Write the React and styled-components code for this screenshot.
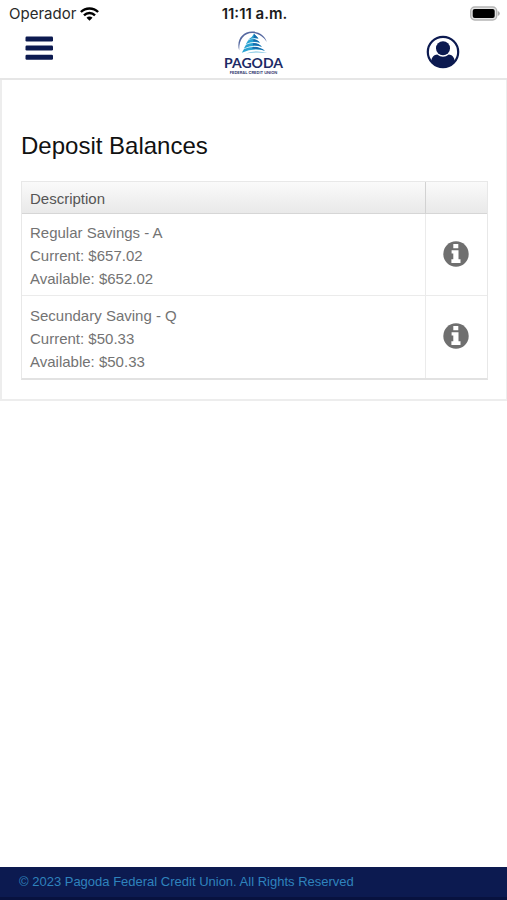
import React from "react";
import styled, { createGlobalStyle } from "styled-components";

const GlobalStyle = createGlobalStyle`
  * { box-sizing: border-box; }
  body {
    margin: 0;
    background: #fff;
    font-family: "Liberation Sans", Arial, sans-serif;
  }
`;

const Page = styled.div`
  min-height: 100vh;
  display: flex;
  flex-direction: column;
`;

const StatusBar = styled.div`
  display: grid;
  grid-template-columns: 1fr auto 1fr;
  align-items: center;
  height: 27px;
  padding: 0 7px 0 9px;
  font-family: Inter, sans-serif;
  font-size: 15px;
  color: #2a2a2a;
`;

const Carrier = styled.div`
  display: flex;
  align-items: center;
  gap: 4px;
`;

const Clock = styled.time`
  font-weight: 600;
  color: #1c1c1c;
`;

const Battery = styled.svg`
  justify-self: end;
  display: block;
`;

const TopBar = styled.header`
  display: grid;
  grid-template-columns: 1fr auto 1fr;
  align-items: start;
  height: 53px;
  border-bottom: 2px solid #e6e6e6;
`;

const IconButton = styled.button`
  display: flex;
  justify-self: ${(p) => p.$side};
  margin: 0 ${(p) => (p.$side === "end" ? 47 : 25)}px;
  padding: 8px 0 0;
  border: 0;
  background: none;
  color: #0c1a50;
  cursor: pointer;
`;

const Logo = styled.a`
  display: flex;
  flex-direction: column;
  align-items: center;
  padding-top: 4px;
  text-decoration: none;
  font-family: Lato, sans-serif;
  color: #1d2b66;
`;

const LogoName = styled.span`
  font-size: 14px;
  line-height: 17px;
  font-weight: 700;
`;

const LogoTagline = styled.span`
  font-family: Inter, sans-serif;
  font-size: 4px;
  line-height: 4px;
  font-weight: 600;
`;

const Card = styled.main`
  padding: 48px 18px 19px 19px;
  border: solid #ededed;
  border-width: 0 1px 2px 2px;
`;

const Title = styled.h1`
  margin: 0 0 18px;
  font-size: 24px;
  line-height: 35px;
  font-weight: 400;
  color: #111;
`;

const Table = styled.table`
  width: 100%;
  border-spacing: 0;
  border: 1px solid #e8e8e8;
  border-bottom: 2px solid #e2e2e2;
  font-size: 15px;
  text-align: left;
`;

const HeadCell = styled.th`
  height: 32px;
  padding: 1px 8px 0;
  border-bottom: 1px solid #d6d6d6;
  background: linear-gradient(#fafafa, #e9e9e9);
  font-weight: 400;
  color: #555;
`;

const ActionHead = styled(HeadCell)`
  width: 62px;
  border-left: 1px solid #d2d2d2;
`;

const Cell = styled.td`
  height: 82px;
  padding: 7px 8px 5px;
  border-bottom: ${(p) => (p.$last ? "0" : "1px solid #ebebeb")};
  line-height: 23px;
  color: #737373;
`;

const ActionCell = styled(Cell)`
  padding: 0 1px 2px 0;
  border-left: 1px solid #ebebeb;
`;

const InfoButton = styled.button`
  display: block;
  margin: 0 auto;
  padding: 0;
  border: 0;
  background: none;
  color: #6f6f6f;
  cursor: pointer;
`;

const Svg = styled.svg`
  display: block;
`;

const Footer = styled.footer`
  margin-top: auto;
  height: 33px;
  padding: 0 19px;
  border-bottom: 3px solid #08123f;
  background: #0c1a50;
  font-size: 13px;
  line-height: 30px;
  color: #2f83bd;
`;

const accounts = [
  { name: "Regular Savings - A", current: "$657.02", available: "$652.02" },
  { name: "Secundary Saving - Q", current: "$50.33", available: "$50.33" },
];

function WifiIcon() {
  return (
    <Svg width="19" height="14" viewBox="0 0 19 14" aria-hidden="true">
      <g fill="none" stroke="#000" strokeWidth="2.4">
        <path d="M0.9 5A12.2 12.2 0 0 1 18.1 5" />
        <path d="M4 8.3A7.8 7.8 0 0 1 15 8.3" />
      </g>
      <path d="M6.5 10.7A4.2 4.2 0 0 1 12.5 10.7L9.5 13.7Z" />
    </Svg>
  );
}

function BatteryIcon() {
  return (
    <Battery width="31" height="15" viewBox="0 0 31 15" aria-hidden="true">
      <rect x="1.7" y="1" width="26" height="13" rx="4" fill="#e4e4e4" stroke="#b5b5b5" strokeWidth="1.4" />
      <rect x="3.7" y="3" width="22" height="9" rx="2" fill="#000" />
      <path d="M28.8 5Q30.8 5.8 30.8 7.5T28.8 10Z" fill="#aaa" />
    </Battery>
  );
}

function MenuIcon() {
  return (
    <Svg width="28" height="25" viewBox="0 0 28 25" fill="currentColor" aria-hidden="true">
      <rect x="0.5" y="1.5" width="27.5" height="5" rx="1.2" />
      <rect x="0.5" y="10.5" width="27.5" height="5" rx="1.2" />
      <rect x="0.5" y="19.7" width="27.5" height="5" rx="1.2" />
    </Svg>
  );
}

function ProfileIcon() {
  return (
    <Svg width="34" height="34" viewBox="0 0 34 34" aria-hidden="true">
      <circle cx="17" cy="17" r="15.2" fill="none" stroke="currentColor" strokeWidth="2.2" />
      <circle cx="17" cy="13.3" r="7" fill="currentColor" />
      <path d="M5.2 26C5.8 21.8 8.2 19.9 11.2 19.5Q17 24 22.8 19.5C25.8 19.9 28.2 21.8 28.8 26Q24 32.5 17 32.5T5.2 26Z" fill="currentColor" />
    </Svg>
  );
}

function PagodaMark() {
  return (
    <Svg width="32" height="23" viewBox="0 0 32 23" aria-hidden="true">
      <path d="M2.2 19.5C-1 9 5.5 .7 15 .6C22 .5 28 4.5 29.8 11C26.4 5.4 21 2.2 15.4 2.1C7 2 1.8 9 2.2 19.5Z" fill="#5568a0" />
      <g fill="#2aa3d2">
        <path d="M17 2.8L21.5 7.6Q16 6.3 11 8.8Q15.5 6.2 17 2.8Z" />
        <path d="M11 9.5Q17.5 5.8 23 11.8Q15.5 9.6 8.8 13.3Z" />
        <path d="M9 13.8Q17.5 9.6 25 15.8Q15.5 13.2 6.8 17.6Z" />
        <path d="M7 18Q18 13.2 28 19.8Q16 16.6 4.8 21.7Z" />
      </g>
      <g fill="#176cad">
        <path d="M17 2.8L21.5 7.6Q19.3 6.8 16.6 7Z" />
        <path d="M16.5 8.2Q20.3 8 23 11.8Q20 10.4 16.2 10.5Z" />
        <path d="M16.2 12Q21.5 11.8 25 15.8Q20.8 14 15.8 14.2Z" />
        <path d="M15.8 15.8Q23 15.8 28 19.8Q21.5 17.6 15.2 17.8Z" />
      </g>
      <path d="M9 22.4Q19 18.6 30.5 22Q20 20.8 9 22.4Z" fill="#74bfe0" />
    </Svg>
  );
}

function InfoIcon() {
  return (
    <Svg width="26" height="26" viewBox="0 0 26 26" aria-hidden="true">
      <circle cx="13" cy="13" r="12.7" fill="currentColor" />
      <path d="M10.3 3.1H15.3V7.3H10.3ZM8.6 9.2H15.5V18.3H17.5V21.9H8.4V18.3H10.3V12.6H8.6Z" fill="#fff" />
    </Svg>
  );
}

export default function App() {
  return (
    <Page>
      <GlobalStyle />
      <StatusBar>
        <Carrier>
          <span>Operador</span>
          <WifiIcon />
        </Carrier>
        <Clock>11:11 a.m.</Clock>
        <BatteryIcon />
      </StatusBar>
      <TopBar>
        <IconButton type="button" $side="start" aria-label="Menu">
          <MenuIcon />
        </IconButton>
        <Logo href="#home">
          <PagodaMark />
          <LogoName>PAGODA</LogoName>
          <LogoTagline>FEDERAL CREDIT UNION</LogoTagline>
        </Logo>
        <IconButton type="button" $side="end" aria-label="Profile">
          <ProfileIcon />
        </IconButton>
      </TopBar>
      <Card>
        <Title>Deposit Balances</Title>
        <Table>
          <thead>
            <tr>
              <HeadCell scope="col">Description</HeadCell>
              <ActionHead scope="col" aria-label="Details" />
            </tr>
          </thead>
          <tbody>
            {accounts.map((account, i) => (
              <tr key={account.name}>
                <Cell $last={i === accounts.length - 1}>
                  <div>{account.name}</div>
                  <div>Current: {account.current}</div>
                  <div>Available: {account.available}</div>
                </Cell>
                <ActionCell $last={i === accounts.length - 1}>
                  <InfoButton type="button" aria-label={`Details for ${account.name}`}>
                    <InfoIcon />
                  </InfoButton>
                </ActionCell>
              </tr>
            ))}
          </tbody>
        </Table>
      </Card>
      <Footer>© 2023 Pagoda Federal Credit Union. All Rights Reserved</Footer>
    </Page>
  );
}
